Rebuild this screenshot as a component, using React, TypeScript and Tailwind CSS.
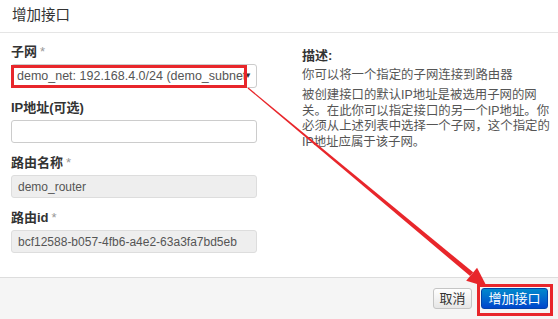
import React from "react";

const font = { fontFamily: '"Liberation Sans", "Noto Sans CJK SC", sans-serif' };

function Field({
  label,
  required,
  children,
}: {
  label: string;
  required?: boolean;
  children: React.ReactNode;
}) {
  return (
    <div className="mb-[10px]">
      <div className="h-[20px] leading-[20px] text-[13px] font-bold text-[#333]">
        {label}
        {required && <span className="ml-[3px] font-normal text-[#999]">*</span>}
      </div>
      <div className="mt-[2px]">{children}</div>
    </div>
  );
}

export default function App() {
  // arrow geometry
  const S = [248, 88];
  const T = [487, 287];
  const dx = T[0] - S[0];
  const dy = T[1] - S[1];
  const L = Math.hypot(dx, dy);
  const d = [dx / L, dy / L];
  const n = [-d[1], d[0]];
  const B = [T[0] - 20 * d[0], T[1] - 20 * d[1]];
  const p = (pt: number[], k: number) => `${pt[0] + k * n[0]},${pt[1] + k * n[1]}`;
  const shaft = [p(S, -0.6), p(S, 0.6), p(B, 2.4), p(B, -2.4)].join(" ");
  const head = [`${T[0]},${T[1]}`, p(B, 8.5), p(B, -8.5)].join(" ");

  return (
    <div className="relative w-[558px] h-[319px] overflow-hidden bg-white" style={font}>
      {/* header */}
      <div className="h-[33px] border-b border-[#e5e5e5] flex items-center px-[12px]">
        <span className="text-[14.5px] text-[#333]">增加接口</span>
      </div>

      {/* body */}
      <div className="h-[244px] flex pt-[9px]">
        <div className="w-[246px] ml-[11px]">
          <Field label="子网" required>
            <div className="h-[24px] border border-[#ccc] rounded-[3px] bg-white flex items-center pl-[5px] pr-[4px]">
              <div className="w-[228px] overflow-hidden whitespace-nowrap text-[12.5px] text-[#555]">
                demo_net: 192.168.4.0/24 (demo_subnet)
              </div>
              <span className="ml-auto text-[8px] text-[#333] leading-none">▼</span>
            </div>
          </Field>
          <Field label="IP地址(可选)">
            <div className="h-[23px] border border-[#ccc] rounded-[3px] bg-white" />
          </Field>
          <Field label="路由名称" required>
            <div className="h-[23px] border border-[#ddd] rounded-[3px] bg-[#eee] flex items-center pl-[6px] text-[12px] text-[#555]">
              demo_router
            </div>
          </Field>
          <Field label="路由id" required>
            <div className="h-[23px] border border-[#ddd] rounded-[3px] bg-[#eee] flex items-center pl-[6px] text-[12px] text-[#555]">
              bcf12588-b057-4fb6-a4e2-63a3fa7bd5eb
            </div>
          </Field>
        </div>

        <div className="ml-[45px] w-[250px] pt-[6px]">
          <div className="text-[13px] font-bold text-[#333] leading-[16px]">描述:</div>
          <div className="mt-[2px] text-[12.4px] text-[#555] leading-[18px] whitespace-nowrap">
            你可以将一个指定的子网连接到路由器
          </div>
          <div className="mt-[4px] text-[12.4px] text-[#555] leading-[15.5px] whitespace-nowrap">
            <div>被创建接口的默认IP地址是被选用子网的网</div>
            <div>关。在此你可以指定接口的另一个IP地址。你</div>
            <div>必须从上述列表中选择一个子网，这个指定的</div>
            <div>IP地址应属于该子网。</div>
          </div>
        </div>
      </div>

      {/* footer */}
      <div className="h-[42px] border-t border-[#ddd] bg-[#f5f5f5] flex items-center justify-end pr-[10px] gap-[9px]">
        <button className="h-[21px] w-[39px] rounded-[3px] border border-[#c5c5c5] bg-gradient-to-b from-white to-[#e6e6e6] text-[13px] text-[#333] leading-none">
          取消
        </button>
        <button className="h-[21px] w-[67px] rounded-[3px] border border-[#0044aa] bg-gradient-to-b from-[#0088cc] to-[#0044cc] text-[13px] text-white leading-none">
          增加接口
        </button>
      </div>

      {/* annotations */}
      <div className="absolute left-[11px] top-[65px] w-[236px] h-[23px] border-[3px] border-[#e8262b]" />
      <div className="absolute left-[477px] top-[284px] w-[76px] h-[32px] border-[3px] border-[#e8262b]" />
      <svg className="absolute left-0 top-0" width="558" height="319">
        <polygon points={shaft} fill="#e8262b" />
        <polygon points={head} fill="#e8262b" />
      </svg>
    </div>
  );
}
